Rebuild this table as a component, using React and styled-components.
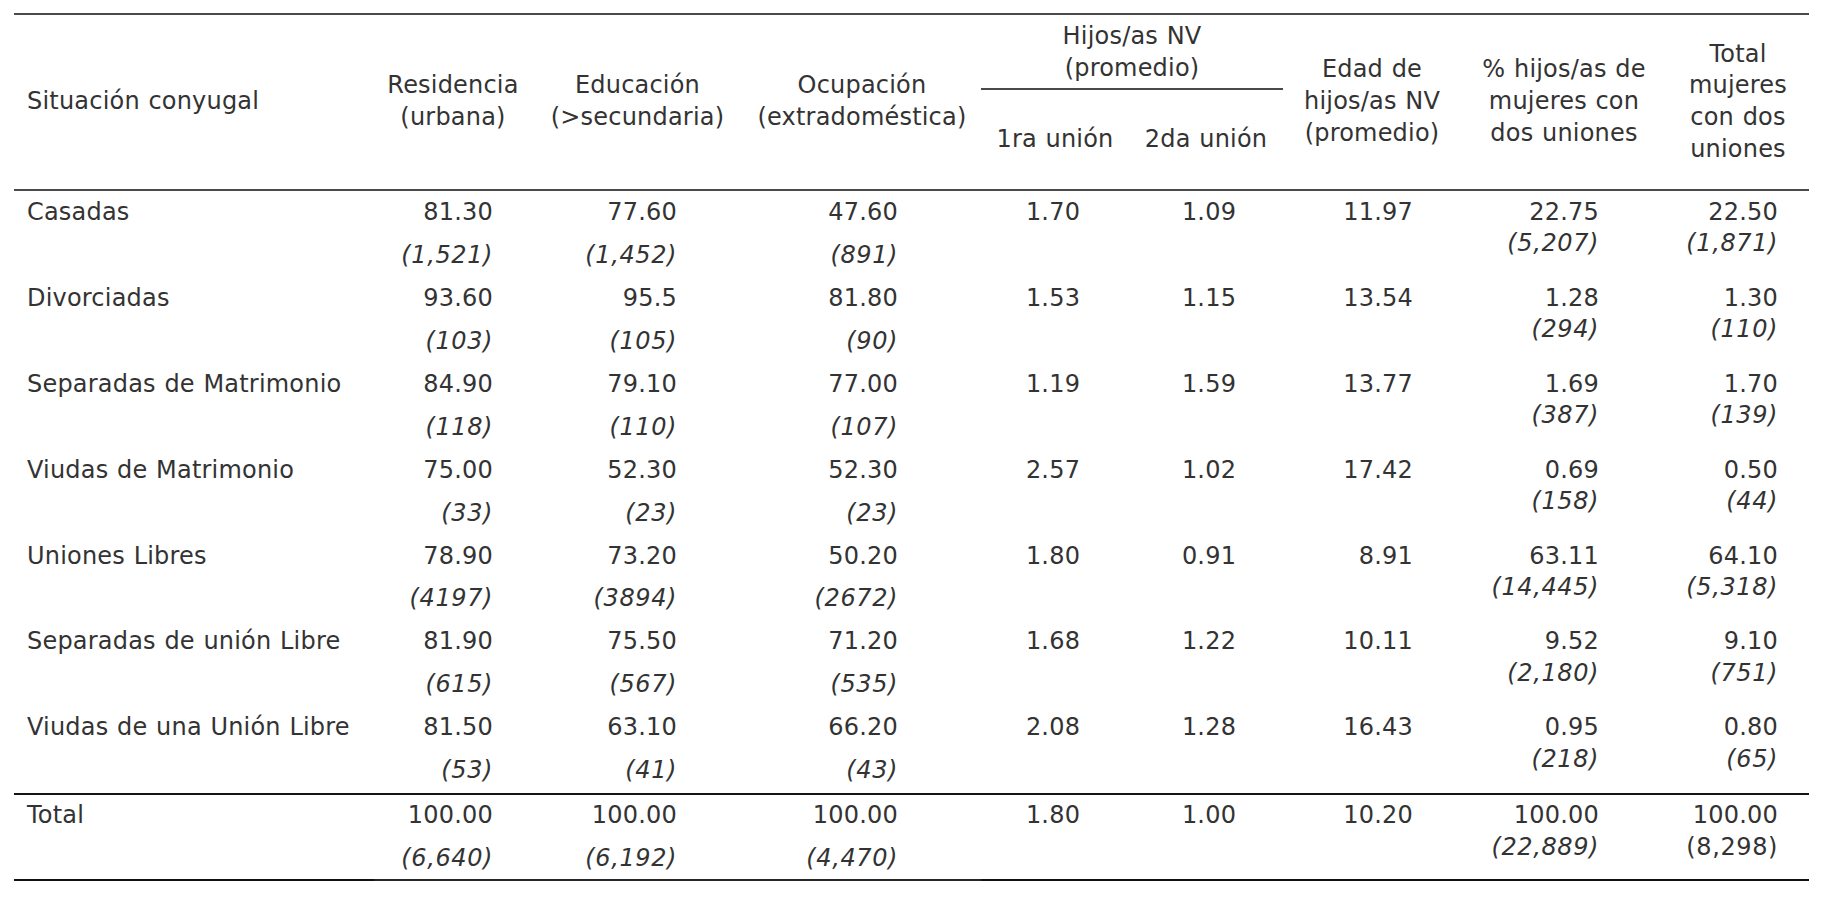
import React from "react";
import styled, { createGlobalStyle } from "styled-components";

const GlobalStyle = createGlobalStyle`
  body {
    margin: 0;
    background: #ffffff;
  }
`;

const Page = styled.div`
  padding: 13px 0 0 14px;
  font-family: "DejaVu Sans", Verdana, sans-serif;
  font-size: 24px;
  line-height: 31.7px;
  letter-spacing: 0.2px;
  word-spacing: 0.8px;
  color: #333333;
`;

const Table = styled.table`
  width: 1795px;
  table-layout: fixed;
  border-collapse: separate;
  border-spacing: 0;
`;

const HeadCell = styled.th`
  font-weight: normal;
  white-space: nowrap;
  text-align: ${(p) => p.$align || "center"};
  vertical-align: middle;
  padding: ${(p) => p.$pad || "0"};
  border-top: ${(p) => (p.$top ? "2px solid #4a4a4a" : "0")};
  border-bottom: ${(p) => (p.$bottom ? "2px solid #4a4a4a" : "0")};
`;

const Cell = styled.td`
  white-space: nowrap;
  vertical-align: top;
  text-align: ${(p) => p.$align};
  padding: 5.65px ${(p) => p.$pr || 0}px ${(p) => (p.$last ? 3.65 : 5.65)}px
    ${(p) => p.$pl || 0}px;
  border-top: ${(p) => (p.$rule ? "2px solid #151515" : "0")};
  border-bottom: ${(p) => (p.$last ? `2px solid ${p.$tone || "#111"}` : "0")};
`;

const Count = styled.span`
  font-style: ${(p) => (p.$upright ? "normal" : "italic")};
  letter-spacing: 0.6px;
`;

// column widths and the padding that places the figures
const cols = [
  { w: 360, align: "left", pl: 13 },
  { w: 158, align: "right", pr: 39, tone: "#262626" },
  { w: 211, align: "right", pr: 66, tone: "#262626" },
  { w: 238, align: "right", pr: 83, tone: "#262626" },
  { w: 148, align: "center", pr: 4 },
  { w: 154, align: "center", pl: 6 },
  { w: 178, align: "right", pr: 48 },
  { w: 206, align: "right", pr: 68 },
  { w: 142, align: "right", pr: 31 },
];

const rows = [
  ["Casadas", "81.30", "(1,521)", "77.60", "(1,452)", "47.60", "(891)", "1.70", "1.09", "11.97", "22.75", "(5,207)", "22.50", "(1,871)"],
  ["Divorciadas", "93.60", "(103)", "95.5", "(105)", "81.80", "(90)", "1.53", "1.15", "13.54", "1.28", "(294)", "1.30", "(110)"],
  ["Separadas de Matrimonio", "84.90", "(118)", "79.10", "(110)", "77.00", "(107)", "1.19", "1.59", "13.77", "1.69", "(387)", "1.70", "(139)"],
  ["Viudas de Matrimonio", "75.00", "(33)", "52.30", "(23)", "52.30", "(23)", "2.57", "1.02", "17.42", "0.69", "(158)", "0.50", "(44)"],
  ["Uniones Libres", "78.90", "(4197)", "73.20", "(3894)", "50.20", "(2672)", "1.80", "0.91", "8.91", "63.11", "(14,445)", "64.10", "(5,318)"],
  ["Separadas de unión Libre", "81.90", "(615)", "75.50", "(567)", "71.20", "(535)", "1.68", "1.22", "10.11", "9.52", "(2,180)", "9.10", "(751)"],
  ["Viudas de una Unión Libre", "81.50", "(53)", "63.10", "(41)", "66.20", "(43)", "2.08", "1.28", "16.43", "0.95", "(218)", "0.80", "(65)"],
];

const total = ["Total", "100.00", "(6,640)", "100.00", "(6,192)", "100.00", "(4,470)", "1.80", "1.00", "10.20", "100.00", "(22,889)", "100.00", "(8,298)"];

function Group({ data, isTotal }) {
  const [label, r, rn, e, en, o, on, h1, h2, edad, pct, pctn, tot, totn] = data;
  const c = (i, extra = {}) => ({
    $align: cols[i].align,
    $pl: cols[i].pl,
    $pr: cols[i].pr,
    $rule: isTotal,
    ...extra,
  });
  const under = (i) => ({
    $align: cols[i].align,
    $pl: cols[i].pl,
    $pr: cols[i].pr,
    $last: isTotal,
    $tone: cols[i].tone,
  });

  return (
    <>
      <tr>
        <Cell {...c(0)}>{label}</Cell>
        <Cell {...c(1)}>{r}</Cell>
        <Cell {...c(2)}>{e}</Cell>
        <Cell {...c(3)}>{o}</Cell>
        <Cell {...c(4)}>{h1}</Cell>
        <Cell {...c(5)}>{h2}</Cell>
        <Cell {...c(6)}>{edad}</Cell>
        <Cell rowSpan={2} {...c(7, { $last: isTotal })}>
          {pct}
          <br />
          <Count>{pctn}</Count>
        </Cell>
        <Cell rowSpan={2} {...c(8, { $last: isTotal })}>
          {tot}
          <br />
          <Count $upright={isTotal}>{totn}</Count>
        </Cell>
      </tr>
      <tr>
        <Cell {...under(0)} />
        <Cell {...under(1)}>
          <Count>{rn}</Count>
        </Cell>
        <Cell {...under(2)}>
          <Count>{en}</Count>
        </Cell>
        <Cell {...under(3)}>
          <Count>{on}</Count>
        </Cell>
        <Cell {...under(4)} />
        <Cell {...under(5)} />
        <Cell {...under(6)} />
      </tr>
    </>
  );
}

export default function App() {
  return (
    <Page>
      <GlobalStyle />
      <Table>
        <colgroup>
          {cols.map((col, i) => (
            <col key={i} style={{ width: col.w }} />
          ))}
        </colgroup>
        <thead>
          <tr>
            <HeadCell rowSpan={2} $top $bottom $align="left" $pad="0 0 0 13px">
              Situación conyugal
            </HeadCell>
            <HeadCell rowSpan={2} $top $bottom>
              Residencia
              <br />
              (urbana)
            </HeadCell>
            <HeadCell rowSpan={2} $top $bottom>
              Educación
              <br />
              (&gt;secundaria)
            </HeadCell>
            <HeadCell rowSpan={2} $top $bottom>
              Ocupación
              <br />
              (extradoméstica)
            </HeadCell>
            <HeadCell colSpan={2} $top $bottom $pad="6px 0 3.6px">
              Hijos/as NV
              <br />
              (promedio)
            </HeadCell>
            <HeadCell rowSpan={2} $top $bottom>
              Edad de
              <br />
              hijos/as NV
              <br />
              (promedio)
            </HeadCell>
            <HeadCell rowSpan={2} $top $bottom>
              % hijos/as de
              <br />
              mujeres con
              <br />
              dos uniones
            </HeadCell>
            <HeadCell rowSpan={2} $top $bottom>
              Total
              <br />
              mujeres
              <br />
              con dos
              <br />
              uniones
            </HeadCell>
          </tr>
          <tr>
            <HeadCell $bottom $pad="33.65px 0">
              1ra unión
            </HeadCell>
            <HeadCell $bottom $pad="33.65px 0">
              2da unión
            </HeadCell>
          </tr>
        </thead>
        <tbody>
          {rows.map((row) => (
            <Group key={row[0]} data={row} />
          ))}
          <Group data={total} isTotal />
        </tbody>
      </Table>
    </Page>
  );
}
